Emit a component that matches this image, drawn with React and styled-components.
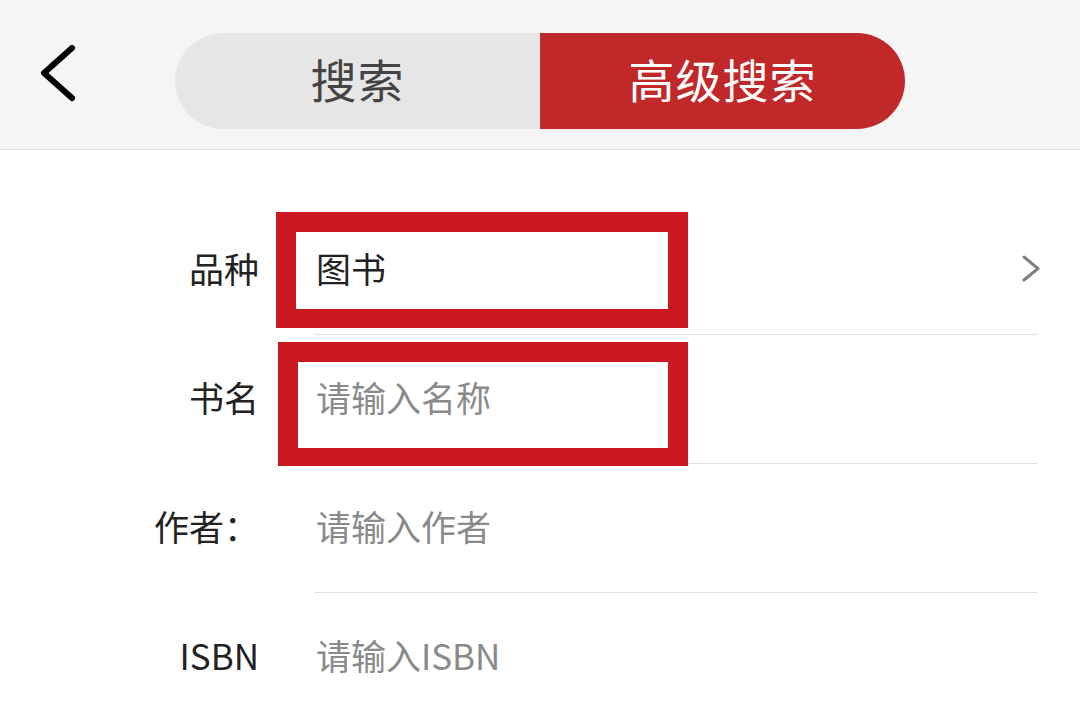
import React from "react";
import styled, { createGlobalStyle } from "styled-components";

const GlobalStyle = createGlobalStyle`
  html, body {
    margin: 0;
    padding: 0;
    background: #ffffff;
    overflow: hidden;
    font-family: "Noto Sans CJK SC", "Noto Sans", sans-serif;
  }
`;

const rows = [
  { label: "品种", value: "图书", arrow: true, mark: { left: 276, top: 6, width: 412, height: 116, top2: 20, bottom: 19 } },
  { label: "书名", placeholder: "请输入名称", mark: { left: 278, top: 7, width: 410, height: 124, top2: 20, bottom: 18 } },
  { label: "作者：", placeholder: "请输入作者" },
  { label: "ISBN", placeholder: "请输入ISBN", last: true },
];

export default function App() {
  return (
    <>
      <GlobalStyle />
      <Page>
        <Header>
          <BackButton>
            <svg width="40" height="60" viewBox="0 0 40 60">
              <polyline
                points="34,3 6,28 34,53"
                fill="none"
                stroke="#000"
                strokeWidth="6"
                strokeLinecap="round"
                strokeLinejoin="round"
              />
            </svg>
          </BackButton>
          <Segmented>
            <Segment>搜索</Segment>
            <Segment active>高级搜索</Segment>
          </Segmented>
          <span />
        </Header>
        <Form>
          {rows.map((r) => (
            <Row key={r.label}>
              <Label>{r.label}</Label>
              <Field last={r.last}>
                {r.value ? <Value>{r.value}</Value> : <Placeholder>{r.placeholder}</Placeholder>}
                {r.arrow && (
                  <Arrow width="20" height="30" viewBox="0 0 20 30">
                    <polyline
                      points="4,3 18,14.5 4,26"
                      fill="none"
                      stroke="#808080"
                      strokeWidth="3"
                      strokeLinecap="round"
                      strokeLinejoin="round"
                    />
                  </Arrow>
                )}
              </Field>
              {r.mark && (
                <Mark
                  style={{
                    left: r.mark.left,
                    top: r.mark.top,
                    width: r.mark.width,
                    height: r.mark.height,
                    borderTopWidth: r.mark.top2,
                    borderBottomWidth: r.mark.bottom,
                  }}
                />
              )}
            </Row>
          ))}
        </Form>
      </Page>
    </>
  );
}

const Page = styled.div`
  width: 1080px;
  height: 711px;
  overflow: hidden;
  background: #fff;
`;

const Header = styled.div`
  height: 149px;
  background: #f5f5f5;
  border-bottom: 1px solid #dcdcdc;
  display: grid;
  grid-template-columns: 1fr auto 1fr;
  align-items: center;
`;

const BackButton = styled.div`
  justify-self: start;
  margin-left: 38px;
  display: flex;
  svg {
    display: block;
  }
`;

const Segmented = styled.div`
  align-self: end;
  margin-bottom: 20px;
  width: 730px;
  height: 96px;
  border-radius: 48px;
  overflow: hidden;
  display: flex;
`;

const Segment = styled.div`
  flex: 1;
  display: flex;
  align-items: center;
  justify-content: center;
  padding-bottom: 6px;
  font-size: 46px;
  letter-spacing: 1px;
  background: ${(p) => (p.active ? "#c0282a" : "#e6e6e6")};
  color: ${(p) => (p.active ? "#ffffff" : "#444444")};
`;

const Form = styled.div`
  padding-top: 56px;
`;

const Row = styled.div`
  position: relative;
  height: 129px;
  display: flex;
  align-items: stretch;
`;

const Label = styled.div`
  width: 259px;
  flex-shrink: 0;
  display: flex;
  align-items: center;
  justify-content: flex-end;
  padding-bottom: 6px;
  box-sizing: border-box;
  font-size: 35px;
  color: #222;
  white-space: nowrap;
`;

const Field = styled.div`
  flex: 1;
  margin-left: 55px;
  margin-right: 42px;
  padding-left: 2px;
  padding-bottom: 6px;
  display: flex;
  align-items: center;
  justify-content: space-between;
  border-bottom: ${(p) => (p.last ? "none" : "1px solid #e3e3e3")};
`;

const Value = styled.span`
  font-size: 35px;
  color: #222;
`;

const Placeholder = styled.span`
  font-size: 35px;
  color: #8a8a8a;
`;

const Arrow = styled.svg`
  display: block;
  margin-right: -2px;
  margin-bottom: -4px;
`;

const Mark = styled.div`
  position: absolute;
  box-sizing: border-box;
  border-style: solid;
  border-color: #cc1820;
  border-left-width: 20px;
  border-right-width: 20px;
  pointer-events: none;
`;
